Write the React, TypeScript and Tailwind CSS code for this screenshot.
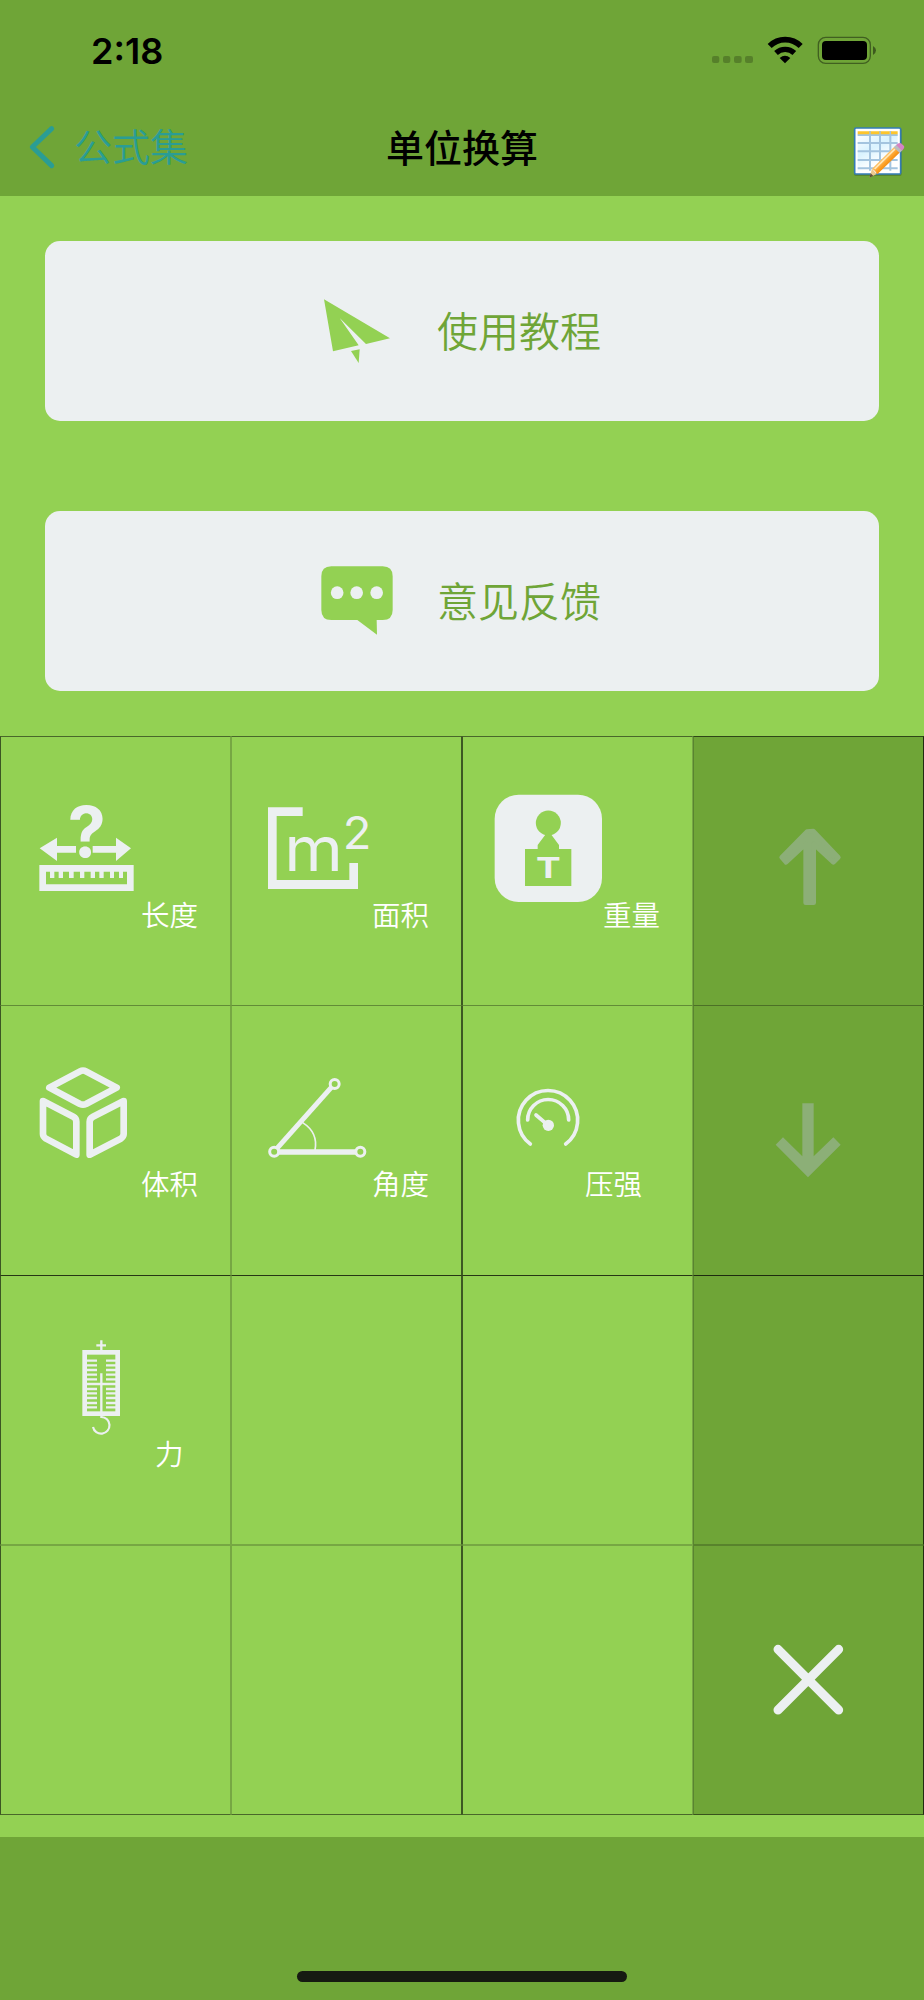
import { type ReactNode } from 'react'

type UnitCell = {
  label?: string
  labelClass?: string
  icon?: ReactNode
}

function StatusIcons() {
  return (
    <svg className="h-[40px] w-[180px]" viewBox="714 90 540 120">
      <g fill="#000" fillOpacity="0.22">
        <rect x="750" y="168" width="22" height="21" rx="6" />
        <rect x="783" y="168" width="22" height="21" rx="6" />
        <rect x="816" y="168" width="23" height="21" rx="6" />
        <rect x="849" y="168" width="24" height="21" rx="6" />
      </g>
      <path d="M923 138 A66 66 0 0 1 1016 138" fill="none" stroke="#000" strokeWidth="17" />
      <path d="M942 159 A40 40 0 0 1 997 159" fill="none" stroke="#000" strokeWidth="16" />
      <path d="M953 174 Q969 160 985 174 L969 190 Z" fill="#000" />
      <rect x="1069" y="112" width="156" height="78" rx="22" fill="none" stroke="#000" strokeOpacity="0.42" strokeWidth="4" />
      <rect x="1080" y="123" width="135" height="57" rx="12" fill="#000" />
      <path d="M1233 138 Q1242 143 1242 151 Q1242 160 1233 165 Z" fill="#000" fillOpacity="0.45" />
    </svg>
  )
}

function NotepadIcon() {
  return (
    <svg className="h-[54px] w-[54px]" viewBox="1170 375 162 162">
      <defs>
        <linearGradient id="sheet" x1="0" y1="0" x2="0.6" y2="1">
          <stop offset="0" stopColor="#ffffff" />
          <stop offset="0.45" stopColor="#d9f3ff" />
          <stop offset="0.8" stopColor="#ffffff" />
        </linearGradient>
        <linearGradient id="pencil" x1="0" y1="0" x2="1" y2="1">
          <stop offset="0.3" stopColor="#ffe0a0" />
          <stop offset="0.55" stopColor="#fb9a1c" />
          <stop offset="0.8" stopColor="#c8650c" />
        </linearGradient>
      </defs>
      <rect x="1176" y="385" width="143" height="143" rx="6" fill="#3c6426" fillOpacity="0.45" />
      <rect x="1178" y="384" width="138" height="138" rx="4" fill="#fff" stroke="#347cb6" strokeWidth="5" />
      <rect x="1187" y="400" width="120" height="112" fill="url(#sheet)" />
      <path
        d="M1187 405H1307M1187 429H1307M1187 454H1307M1187 480H1307M1187 505H1307M1224 393V512M1254 393V512M1285 393V512"
        stroke="#a3c4df"
        strokeWidth="6"
      />
      <path d="M1187 398H1222M1226 398H1252M1256 398H1283M1287 398H1307" stroke="#fcc52e" strokeWidth="9" />
      <path d="M1222 533 L1230 506 L1244 522 Z" fill="#edc98f" />
      <path d="M1222 533 L1226 520 L1234 528 Z" fill="#5d5138" />
      <path d="M1230 506 L1297 440 L1314 457 L1246 523 Q1240 511 1230 506 Z" fill="url(#pencil)" />
      <path d="M1238 507 L1299 447" stroke="#ffe9bd" strokeWidth="5" />
      <path d="M1295 442 L1303 434 L1321 451 L1313 459 Z" fill="#b9bcc0" />
      <path d="M1302 435 Q1311 426 1317 430 L1326 438 Q1329 443 1320 452 Z" fill="#d583c4" />
    </svg>
  )
}

const planeIcon = (
  <svg className="h-[80px] w-[80px] fill-[#93d153]" viewBox="111 183 240 240">
    <path d="M132 208 L330 325 L258 342 L179 264 L236 346 L159 364 Z" />
    <path d="M213 363 L239 358 L236 399 Z" />
  </svg>
)

const chatIcon = (
  <svg className="h-[80px] w-[80px]" viewBox="111 183 240 240">
    <path
      d="M154 199 H308 Q338 199 338 229 V330 Q338 360 308 360 H290 L291 404 L232 360 H154 Q124 360 124 330 V229 Q124 199 154 199 Z"
      fill="#93d153"
    />
    <g fill="#ecf0f1">
      <circle cx="171.5" cy="278" r="19" />
      <circle cx="230" cy="278" r="19" />
      <circle cx="290" cy="278" r="19" />
    </g>
  </svg>
)

function ActionCard({ icon, title }: { icon: ReactNode; title: string }) {
  return (
    <button
      type="button"
      className="flex h-[180px] w-full items-center gap-[40px] rounded-[15px] bg-[#ecf0f1] pl-[272px] text-[41px] leading-none font-[350] text-[#6fa537]"
    >
      {icon}
      <span className="pt-[2px] whitespace-nowrap">{title}</span>
    </button>
  )
}

function UnitIcon({ viewBox, children }: { viewBox: string; children: ReactNode }) {
  return (
    <svg className="h-[161px] w-[160px] shrink-0 overflow-visible" viewBox={viewBox} fill="#ecf0f1">
      {children}
    </svg>
  )
}

const lengthIcon = (
  <UnitIcon viewBox="3 21 480 483">
    <text x="203" y="381" fontSize="209" fontWeight="700" fontFamily="Inter, sans-serif" textLength="114" lengthAdjust="spacingAndGlyphs">
      ?
    </text>
    <path d="M119 355 L171 323 V348 H228 V368 H171 V393 Z" />
    <path d="M393 355 L348 323 V348 H278 V368 H348 V393 Z" />
    <path
      fillRule="evenodd"
      d="M118 405 H401 V483 H118 Z M138 425 V463 H381 V425 H369 V444 H357 V425 H342 V444 H330 V425 H311 V444 H298 V425 H285 V444 H272 V425 H253 V444 H240 V425 H221 V444 H207 V425 H189 V444 H176 V425 H163 V444 H150 V425 Z"
    />
  </UnitIcon>
)

const areaIcon = (
  <UnitIcon viewBox="6 21 480 483">
    <path d="M114 232 H218 V258 H140 V450 H358 V399 H384 V477 H114 Z" />
    <text x="163" y="423" fontSize="184" fontFamily="Inter, sans-serif" textLength="176" lengthAdjust="spacingAndGlyphs">
      m
    </text>
    <text x="338" y="356" fontSize="134" fontFamily="Inter, sans-serif" textLength="86" lengthAdjust="spacingAndGlyphs">
      2
    </text>
  </UnitIcon>
)

const weightIcon = (
  <UnitIcon viewBox="9 21 480 483">
    <rect x="104" y="194" width="322" height="322" rx="72" />
    <g fill="#93d153">
      <circle cx="265" cy="279" r="37.5" />
      <path d="M256 314 H274 L297 345 V357 H334 V468 H195 V357 H233 V345 Z" />
    </g>
    <text x="228" y="444" fontSize="84" fontWeight="700" fontFamily="Inter, sans-serif" textLength="74" lengthAdjust="spacingAndGlyphs">
      T
    </text>
  </UnitIcon>
)

const volumeIcon = (
  <UnitIcon viewBox="3 18 480 483">
    <g fill="none" stroke="#ecf0f1" strokeWidth="20" strokeLinejoin="round">
      <path d="M148 263 L240 214 Q249 209 258 214 L350 263 L258 312 Q249 316 240 312 Z" />
      <path d="M129 303 L220 350 Q229 355 229 365 V464 L138 416 Q129 410 129 402 Z" />
      <path d="M371 303 L279 350 Q269 355 269 365 V464 L362 416 Q371 410 371 402 Z" />
    </g>
  </UnitIcon>
)

const angleIcon = (
  <UnitIcon viewBox="696 18 480 483">
    <g fill="none" stroke="#ecf0f1">
      <path d="M831 445 L996 260" strokeWidth="15" />
      <path d="M834 456 H1069" strokeWidth="16" />
      <path d="M908 368 Q955 398 945 450" strokeWidth="5" />
      <circle cx="822.5" cy="455" r="13.5" strokeWidth="9" />
      <circle cx="1004" cy="252" r="13.5" strokeWidth="9" />
      <circle cx="1081" cy="455" r="13.5" strokeWidth="9" />
    </g>
  </UnitIcon>
)

const pressureIcon = (
  <UnitIcon viewBox="9 18 480 483">
    <g fill="none" stroke="#ecf0f1" strokeWidth="11" strokeLinecap="round">
      <path d="M211 432 A89 89 0 1 1 317 432" />
      <path d="M203 360 A61 61 0 0 1 326 360" />
      <path d="M228 345 L262 374" />
    </g>
    <circle cx="265" cy="376" r="17" />
  </UnitIcon>
)

const forceIcon = (
  <UnitIcon viewBox="3 18 480 483">
    <g fill="none" stroke="#ecf0f1">
      <path d="M304 211 V242 M289 226 H318" strokeWidth="7" />
      <rect x="254" y="247" width="99" height="184" strokeWidth="14" />
      <path
        d="M260 272H291M260 286H291M260 300H291M260 314H291M260 328H291M260 357H291M260 370H291M260 384H291M260 399H291M260 412H291M318 272H348M318 286H348M318 300H348M318 314H348M318 328H348M318 357H348M318 370H348M318 384H348M318 399H348M318 412H348"
        strokeWidth="7"
      />
      <path d="M260 342 H348 M304 310 V430" strokeWidth="7" />
      <path d="M304 436 V441 A25 25 0 1 1 279 471" strokeWidth="6.5" />
    </g>
  </UnitIcon>
)

const rows: UnitCell[][] = [
  [
    { label: '长度', icon: lengthIcon },
    { label: '面积', icon: areaIcon },
    { label: '重量', icon: weightIcon },
  ],
  [
    { label: '体积', icon: volumeIcon },
    { label: '角度', icon: angleIcon },
    { label: '压强', icon: pressureIcon, labelClass: 'pl-[122px]' },
  ],
  [{ label: '力', icon: forceIcon, labelClass: 'pl-[154px]' }, {}, {}],
  [{}, {}, {}],
]

const rowBorders = [
  'h-[269px] border-t-[#49672a]',
  'h-[270px] border-t-[#628c37]',
  'h-[270px] border-t-[#263615] border-b border-b-[#76a743]',
  'h-[270px] border-t-[#76a743] border-b border-b-[#49672a]',
]

const sideBorders = [
  'h-[269px] border-t-[#2f4617]',
  'h-[270px] border-t-[#4c7026]',
  'h-[270px] border-t-[#1d2b0f] border-b border-b-[#58832c]',
  'h-[270px] border-t-[#58832c] border-b border-b-[#38521c]',
]

const columnBorders = [
  'border-l-[#3c5623] border-r-[#76a743]',
  'border-l-[#76a743] border-r-[#3d5823]',
  'border-l-[#3d5823] border-r-[#76a743]',
]

const sideIcons: ReactNode[] = [
  <svg key="up" className="h-[268px] w-[229px]" viewBox="12 21 687 804">
    <path
      d="M351 305 L370 303 L445 382 L430 397 L371 342 V518 H347 V342 L288 397 L275 382 Z"
      fill="#8caf77"
      stroke="#8caf77"
      strokeWidth="14"
      strokeLinejoin="round"
    />
  </svg>,
  <svg key="down" className="h-[268px] w-[229px]" viewBox="12 828 687 804">
    <path d="M337 1120 H371 V1279 L430 1222 L452 1244 L354 1342 L257 1244 L279 1222 L337 1279 Z" fill="#8caf77" />
  </svg>,
  null,
  <svg key="close" className="h-[268px] w-[229px]" viewBox="30 48 687 804">
    <path d="M282 358 L464 540 M464 358 L282 540" stroke="#ecf0f1" strokeWidth="27" strokeLinecap="round" />
  </svg>,
]

export default function App() {
  return (
    <div className="flex h-[2000px] w-[924px] flex-col bg-[#6fa537] font-['Inter','Noto_Sans_CJK_SC',sans-serif]">
      <header className="h-[196px]">
        <div className="flex h-[100px] items-start justify-between pr-[44px] pl-[91px]">
          <span className="mt-[29px] text-[36px] leading-[44px] font-semibold text-black">2:18</span>
          <span className="mt-[30px]">
            <StatusIcons />
          </span>
        </div>
        <div className="grid h-[96px] grid-cols-3 px-[18px]">
          <button type="button" className="ml-[10px] flex h-[94px] items-center gap-[17px] text-[38px] leading-none font-[350] text-[#2a9d94]">
            <svg className="h-[46px] w-[29px]" viewBox="84 372 87 138" fill="none">
              <path d="M155 386 L97 441 L155 497" stroke="#2a9d94" strokeWidth="15" strokeLinecap="round" strokeLinejoin="round" />
            </svg>
            <span>公式集</span>
          </button>
          <h1 className="flex h-[95px] items-center justify-center text-[38px] leading-none font-medium whitespace-nowrap text-black">
            单位换算
          </h1>
          <div className="flex justify-end pt-[25px]">
            <NotepadIcon />
          </div>
        </div>
      </header>

      <main className="h-[1641px] bg-[#93d153]">
        <div className="flex flex-col gap-[90px] p-[45px]">
          <ActionCard icon={planeIcon} title="使用教程" />
          <ActionCard icon={chatIcon} title="意见反馈" />
        </div>

        <div className="grid grid-cols-4">
          {rows.map((row, r) => [
            ...row.map((cell, c) => (
              <div key={`${r}-${c}`} className={`flex flex-col border-x border-t ${rowBorders[r]} ${columnBorders[c]}`}>
                {cell.icon}
                {cell.label && (
                  <span className={`text-[28.5px] leading-[35px] font-[350] text-white ${cell.labelClass ?? 'pl-[140px]'}`}>
                    {cell.label}
                  </span>
                )}
              </div>
            )),
            <div key={`${r}-side`} className={`border-x border-t border-l-[#598430] border-r-[#1f2e0f] bg-[#6fa537] ${sideBorders[r]}`}>
              {sideIcons[r]}
            </div>,
          ])}
        </div>
      </main>

      <footer className="flex h-[163px] items-end justify-center pb-[18px]">
        <div className="h-[11px] w-[330px] rounded-full bg-[#161a12]" />
      </footer>
    </div>
  )
}
